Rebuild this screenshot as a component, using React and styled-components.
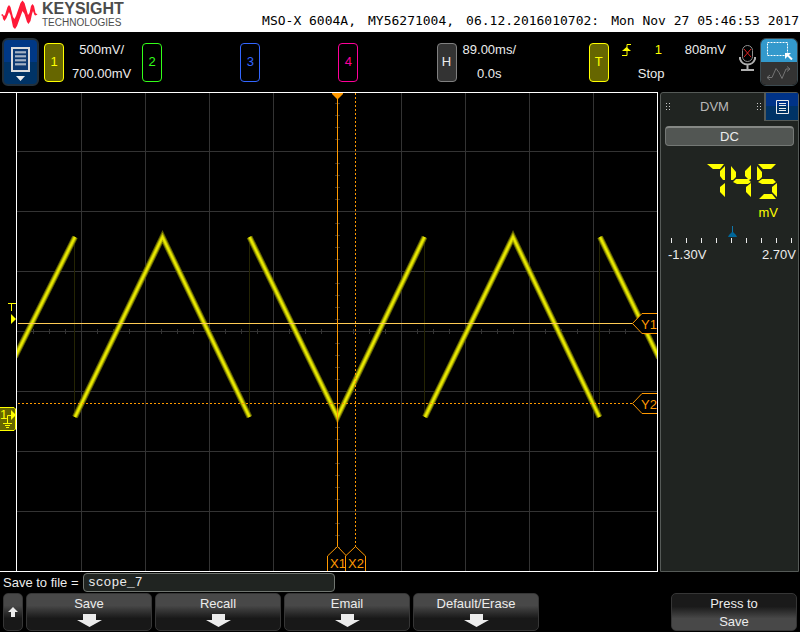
import React from "react";
import styled, { createGlobalStyle } from "styled-components";

const SANS = '"Liberation Sans", Arial, sans-serif';
const MONO = '"DejaVu Sans Mono", "Liberation Mono", monospace';

const GlobalStyle = createGlobalStyle`
  * { box-sizing: border-box; }
  body {
    margin: 0;
    background: #000;
    color: #ececec;
    font-family: ${SANS};
    font-size: 13px;
    line-height: 16px;
  }
  button, input { font: inherit; color: inherit; margin: 0; padding: 0; }
`;

const Screen = styled.div`
  display: flex;
  flex-direction: column;
  background: #000;
`;

const TitleBar = styled.header`
  display: flex;
  justify-content: space-between;
  height: 32px;
  padding: 0 1px;
  background: #fff;
  white-space: nowrap;
`;

const Brand = styled.div`
  display: flex;
  gap: 3px;
`;

const BrandText = styled.div`
  display: flex;
  flex-direction: column;
  padding-top: 1px;
  color: #4c4c4c;
`;

const BrandName = styled.span`
  font-size: 16px;
  line-height: 16px;
  font-weight: bold;
`;

const BrandSub = styled.span`
  font-size: 10px;
  line-height: 11px;
`;

const Identity = styled.div`
  display: flex;
  gap: 12px;
  padding-top: 13px;
  font-family: ${MONO};
  color: #000;
`;

const StatusBar = styled.section`
  display: grid;
  grid-template-columns: 42px repeat(4, 98fr) 152fr 150fr 21px 38px;
  align-items: center;
  height: 60px;
  padding: 0 2px;
`;

const MenuButton = styled.button`
  display: flex;
  flex-direction: column;
  align-items: center;
  justify-content: flex-end;
  gap: 4px;
  width: 37px;
  height: 48px;
  padding-bottom: 3px;
  border: 2px solid #22303c;
  border-radius: 6px;
  background: linear-gradient(#003886 0 50%, #003366 50%);
`;

const Group = styled.div`
  display: flex;
  align-items: center;
`;

const badgeTones = {
  yellow: ["#ffff00", "#666600"],
  green: ["#33ff19", "#000"],
  blue: ["#3366ff", "#000"],
  pink: ["#ff0099", "#000"],
  gray: ["#808080", "#333"],
};

const Badge = styled.button`
  flex: none;
  width: 20px;
  height: 39px;
  border: 1px solid ${(p) => badgeTones[p.$tone][0]};
  border-radius: 4px;
  background: ${(p) => badgeTones[p.$tone][1]};
  color: ${(p) => (p.$tone === "gray" ? "#ececec" : badgeTones[p.$tone][0])};
`;

const Readout = styled.div`
  display: grid;
  gap: 8px;
  padding-left: ${(p) => p.$inset}px;
  text-align: center;
`;

const TriggerInfo = styled.div`
  display: grid;
  gap: 8px;
  padding-left: 12px;
`;

const TriggerLine = styled.div`
  display: grid;
  grid-template-columns: 34px 30px auto;
  align-items: center;
`;

const Source = styled.span`
  color: #ffff00;
`;

const RunState = styled.span`
  padding-left: 17px;
`;

const MicSlot = styled.div`
  display: flex;
  padding-bottom: 8px;
`;

const ModeSwitch = styled.div`
  display: flex;
  flex-direction: column;
  height: 48px;
  overflow: hidden;
  border: 1px solid #3c4a50;
  border-radius: 6px;
`;

const ModeButton = styled.button`
  flex: 1;
  display: grid;
  place-items: center;
  border: 0;
  background: ${(p) => (p.$active ? "#3399cc" : "#333")};
`;

const Main = styled.main`
  display: grid;
  grid-template-columns: minmax(0, 1fr) 140px;
  align-items: stretch;
`;

const Plot = styled.svg`
  display: block;
  width: 100%;
  height: auto;
  font-family: ${SANS};
`;

const SidePanel = styled.aside`
  display: flex;
  flex-direction: column;
  margin-right: 1px;
  border: 1px solid #555a57;
  border-radius: 3px 3px 0 0;
  background: #202421;
`;

const TabRow = styled.div`
  display: grid;
  grid-template-columns: 1fr 34px;
  height: 28px;
`;

const PanelTitle = styled.div`
  display: flex;
  align-items: center;
  justify-content: space-between;
  padding: 0 0 1px 4px;
  color: #b8b8b8;
`;

const PanelMenu = styled.button`
  display: grid;
  place-items: center;
  border: solid #555a57;
  border-width: 0 0 1px 2px;
  background: linear-gradient(#003388 0 50%, #003366 50%);
`;

const ModeSelect = styled.button`
  height: 20px;
  margin: 5px 4px 0;
  border: 1px solid #747875;
  border-top: 2px solid #858885;
  border-radius: 4px;
  background: #525653;
  line-height: 16px;
`;

const Reading = styled.div`
  display: flex;
  flex-direction: column;
  align-items: flex-end;
  padding: 18px 20px 0 0;
  color: #ffff00;
`;

const Unit = styled.span`
  padding-top: 5px;
`;

const Scale = styled.div`
  padding: 5px 4px 0 8px;
`;

const ScaleArt = styled.svg`
  display: block;
  width: 100%;
  height: auto;
`;

const ScaleEnds = styled.div`
  display: flex;
  justify-content: space-between;
  padding: 4px 2px 0 7px;
`;

const FileRow = styled.div`
  display: flex;
  align-items: center;
  height: 21px;
  padding-left: 3px;
`;

const FileLabel = styled.label`
  width: 80px;
  white-space: nowrap;
`;

const FileInput = styled.input`
  width: 252px;
  height: 19px;
  padding: 0 4px 1px;
  border: 1px solid #707570;
  border-radius: 4px;
  background: #202421;
  font-family: "Liberation Mono", monospace;
  outline: 0;
`;

const SoftKeys = styled.nav`
  display: grid;
  grid-template-columns: 20px repeat(6, minmax(0, 1fr));
  gap: 3px;
  padding: 0 3px 1px;
`;

const SoftKey = styled.button`
  display: flex;
  flex-direction: column;
  align-items: center;
  justify-content: ${(p) => (p.$centered ? "center" : "flex-start")};
  gap: 2px;
  height: 38px;
  padding-top: ${(p) => (p.$centered ? 0 : 2)}px;
  border: 1px solid #363636;
  border-radius: 5px;
  background: ${(p) =>
    p.$raised
      ? "linear-gradient(#1a1a1a 0 35%, #484848 68%)"
      : "linear-gradient(#484848 0 32%, #181818 68%)"};
  grid-column: ${(p) => (p.$last ? "-2" : "auto")};
`;

function KeysightMark() {
  return (
    <svg width="38" height="32" viewBox="0 0 38 32" aria-label="Keysight" role="img">
      <path
        fill="#ff1a38"
        d="M0 15L1.500 14L3 16L4 15L6.500 7L8 5L9.500 7L12 17L13.500 19L15 16L19.500 3L21.500 0.500L23.500 3L27 15L28.500 13L30 6L31.500 4L33 6L34.500 13L36.500 14.500L34.500 15.500L33.500 15L32 11L31 14L29.500 21L27.500 24L26 22L23.500 14L21.500 11L20 15L16 26L14 29L12 27L9.500 15L8 12L5.500 18L3.500 21L2 19L1.500 16Z"
      />
    </svg>
  );
}

function PageIcon({ large }) {
  return large ? (
    <svg width="19" height="25" viewBox="0 0 19 25">
      <path d="M1 1h17v23h-17z" fill="#0c3a73" stroke="#dcdcdc" strokeWidth="2" />
      <path d="M4 6h11M4 10h11M4 14h11M4 18h11" stroke="#8090a4" />
      <path d="M4 5h11M4 9h11M4 13h11M4 17h11" stroke="#fff" />
    </svg>
  ) : (
    <svg width="13" height="14" viewBox="0 0 13 14" fill="none" stroke="#ececec">
      <path d="M.5.5h12v13h-12zM3 3.500h7M3 5.500h7M3 8.500h7M3 10.500h7" />
    </svg>
  );
}

function MicIcon() {
  return (
    <svg width="17" height="28" viewBox="0 0 17 28" fill="none">
      <rect x="3.500" y="1.500" width="10" height="16" rx="5" stroke="#909090" />
      <path d="M1 13v2q2 5.500 7.500 5.500t7.500-5.500v-2M8.500 20v6M2 26h13" stroke="#b0b0b0" strokeWidth="2" />
      <path d="M5 5l7 8M12 5l-7 8" stroke="#e02020" />
    </svg>
  );
}

function GripDots() {
  return (
    <svg width="8" height="8" viewBox="0 0 8 8" fill="#c8c8c8">
      <path d="M1 0h1v1h-1zM4 0h1v1h-1zM1 3h1v1h-1zM4 3h1v1h-1zM1 6h1v1h-1zM4 6h1v1h-1z" />
    </svg>
  );
}

function SevenSegment() {
  return (
    <svg width="71" height="36" viewBox="0 0 71 36" fill="#ffff00" role="img" aria-label="745">
      <path d="M0 0h17l-4 5h-7zM18 2v14l-2 0-3-4v-5zM18 19v14l-5-5v-5z" />
      <path d="M24 2l5 6v5l-3 3-2 0zM44 1v14l-2 1-4-4v-5zM29 15h12l3 3-3 2h-11l-4-2zM44 19v14l-5-5v-5z" />
      <path d="M51 0h18l-5 5h-8zM50 2l5 6v5l-3 3-2 0zM55 15h11l3 3-3 2h-11l-4-2zM70 19v14l-5-5v-5zM57 30h8l4 5h-17z" />
    </svg>
  );
}

function DownArrow() {
  return (
    <svg width="25" height="13" viewBox="0 0 25 13" fill="#ececec">
      <path d="M6 0h13v6h6L12.500 13 0 6h6z" />
    </svg>
  );
}

const columns = [81, 145, 209, 273, 401, 465, 529, 593];
const rows = [151, 211, 271, 331, 391, 451, 511];
const xTicks = Array.from({ length: 39 }, (_, i) => 33 + i * 16);
const yTicks = Array.from({ length: 39 }, (_, i) => 103 + i * 12);
const TRACE =
  "M15 357L75 237M75 417L162.500 237L249.500 417M249.500 237L337.500 417L424.500 237M425 417L513 237L599.500 417M600 237L659 358";

function ScopePlot() {
  return (
    <Plot viewBox="0 92 660 480" role="img" aria-label="Channel 1 waveform">
      <defs>
        <clipPath id="graticule">
          <rect x="17" y="93" width="640" height="478" />
        </clipPath>
      </defs>
      <g shapeRendering="crispEdges" stroke="#333" fill="none">
        {columns.map((x) => (
          <path key={x} d={`M${x}.5 93V571`} />
        ))}
        {rows.map((y) => (
          <path key={y} d={`M17 ${y}.5H657`} />
        ))}
        {xTicks.map((x) => (
          <path key={x} d={`M${x}.5 329V334`} />
        ))}
        {yTicks.map((y) => (
          <path key={y} d={`M335 ${y}.5H340`} />
        ))}
        <path d="M74.500 237V417M249.500 237V417M424.500 237V417M599.500 237V417" stroke="#242404" />
      </g>
      <g clipPath="url(#graticule)" fill="none">
        <path d={TRACE} stroke="#5c5c00" strokeWidth="6" />
        <path d={TRACE} stroke="#b0b000" strokeWidth="4" />
        <path d={TRACE} stroke="#e8e800" strokeWidth="2" />
      </g>
      <g shapeRendering="crispEdges" fill="none" stroke="#ff9900">
        <path d="M18 323.500H633" stroke="#ffcc55" />
        <path d="M18 403.500H633" strokeDasharray="2 2" />
        <path d="M337.500 93V547" />
        <path d="M355.500 93V547" strokeDasharray="2 2" />
      </g>
      <path d="M332 93h11v1l-5 5h-1l-5-5z" fill="#ff9900" />
      <g fill="#000" stroke="#ff9900">
        <path d="M657 313.500H642L632.500 323.500L642 333.500H657" />
        <path d="M657 393.500H642L632.500 403.500L642 413.500H657" />
        <path d="M327.500 571V556L337.500 546.500L346.500 556V571" />
        <path d="M345.500 571V556L355.500 546.500L365.500 556V571" />
      </g>
      <g fill="#ff9900" fontSize="13">
        <text x="641" y="329">Y1</text>
        <text x="641" y="409">Y2</text>
        <text x="330" y="568">X1</text>
        <text x="348" y="568">X2</text>
      </g>
      <path
        d="M0 92.500H658M16.500 92V572M0 571.500H658M657.500 92V572"
        stroke="#fff"
        fill="none"
        shapeRendering="crispEdges"
      />
      <path d="M8 303.500h8M11.500 303v8" stroke="#ffff00" />
      <path d="M11 314l5 5-5 5z" fill="#ffff00" />
      <path d="M0 407.500h14l1.500 1.500v20l-1.500 1.500h-14" fill="#666600" stroke="#ffff00" />
      <text x="0" y="419" fontSize="13" fill="#ffff00">1</text>
      <path d="M11 410l5 5-5 5z" fill="#ffff00" />
      <path d="M11 415.500h-3.500v8M3 423.500h9M5 425.500h5M6 427.500h3" fill="none" stroke="#ffff00" />
    </Plot>
  );
}

const softKeys = ["Save", "Recall", "Email", "Default/Erase"];

export default function App() {
  return (
    <Screen>
      <GlobalStyle />
      <TitleBar>
        <Brand>
          <KeysightMark />
          <BrandText>
            <BrandName>KEYSIGHT</BrandName>
            <BrandSub>TECHNOLOGIES</BrandSub>
          </BrandText>
        </Brand>
        <Identity>
          <span>MSO-X 6004A,</span>
          <span>MY56271004,</span>
          <span>06.12.2016010702:</span>
          <span>Mon Nov 27 05:46:53 2017</span>
        </Identity>
      </TitleBar>

      <StatusBar>
        <MenuButton aria-label="Main menu">
          <PageIcon large />
          <svg width="9" height="5" viewBox="0 0 9 5" fill="#ececec">
            <path d="M0 0h9L4.500 5z" />
          </svg>
        </MenuButton>
        <Group>
          <Badge $tone="yellow">1</Badge>
          <Readout $inset={8}>
            <span>500mV/</span>
            <span>700.00mV</span>
          </Readout>
        </Group>
        <Group><Badge $tone="green">2</Badge></Group>
        <Group><Badge $tone="blue">3</Badge></Group>
        <Group><Badge $tone="pink">4</Badge></Group>
        <Group>
          <Badge $tone="gray">H</Badge>
          <Readout $inset={6}>
            <span>89.00ms/</span>
            <span>0.0s</span>
          </Readout>
        </Group>
        <Group>
          <Badge $tone="yellow">T</Badge>
          <TriggerInfo>
            <TriggerLine>
              <svg width="11" height="12" viewBox="0 0 11 12" aria-label="Rising edge" role="img">
                <path d="M1 11.500h5V.500h4" fill="none" stroke="#ffff00" />
                <path d="M1 7h9L5.500 3z" fill="#ffff00" />
              </svg>
              <Source>1</Source>
              <span>808mV</span>
            </TriggerLine>
            <RunState>Stop</RunState>
          </TriggerInfo>
        </Group>
        <MicSlot>
          <MicIcon />
        </MicSlot>
        <ModeSwitch>
          <ModeButton $active aria-label="Zone select">
            <svg width="28" height="19" viewBox="0 0 28 19" fill="none">
              <path d="M2.500 1.500h20v13h-20z" stroke="#fff" strokeDasharray="2 1" />
              <path d="M27 18.500l-5-5" stroke="#fff" strokeWidth="2" />
              <path d="M20 12h6l-6 6z" fill="#fff" />
            </svg>
          </ModeButton>
          <ModeButton aria-label="Waveform drag">
            <svg width="25" height="15" viewBox="0 0 25 15" fill="none" stroke="#747474">
              <path d="M1 11.500h5L10 2.500l3 4 3 6 4-9.500h4M4 9l-3 2.500 3 2.500M21 .500l3 2.500-3 2.500" />
            </svg>
          </ModeButton>
        </ModeSwitch>
      </StatusBar>

      <Main>
        <ScopePlot />
        <SidePanel>
          <TabRow>
            <PanelTitle>
              <GripDots />
              <span>DVM</span>
              <GripDots />
            </PanelTitle>
            <PanelMenu aria-label="Panel menu">
              <PageIcon />
            </PanelMenu>
          </TabRow>
          <ModeSelect>DC</ModeSelect>
          <Reading>
            <SevenSegment />
            <Unit>mV</Unit>
          </Reading>
          <Scale>
            <ScaleArt viewBox="0 0 125 17">
              <path
                d="M2.500 12v5M17.500 12v5M32.500 12v5M47.500 12v5M62.500 12v5M77.500 12v5M92.500 12v5M107.500 12v5M122.500 12v5"
                stroke="#ececec"
                shapeRendering="crispEdges"
              />
              <path d="M63.500 0v8" stroke="#1177aa" />
              <path d="M59 11l1-2 3-3h1l3 3 1 2z" fill="#006699" />
            </ScaleArt>
          </Scale>
          <ScaleEnds>
            <span>-1.30V</span>
            <span>2.70V</span>
          </ScaleEnds>
        </SidePanel>
      </Main>

      <FileRow>
        <FileLabel htmlFor="filename">Save to file =</FileLabel>
        <FileInput id="filename" defaultValue="scope_7" />
      </FileRow>

      <SoftKeys>
        <SoftKey $centered aria-label="Back">
          <svg width="10" height="10" viewBox="0 0 10 10" fill="#ececec">
            <path d="M5 0l5 5H7v5H3V5H0z" />
          </svg>
        </SoftKey>
        {softKeys.map((name) => (
          <SoftKey key={name}>
            {name}
            <DownArrow />
          </SoftKey>
        ))}
        <SoftKey $raised $last>
          <span>Press to</span>
          <span>Save</span>
        </SoftKey>
      </SoftKeys>
    </Screen>
  );
}
